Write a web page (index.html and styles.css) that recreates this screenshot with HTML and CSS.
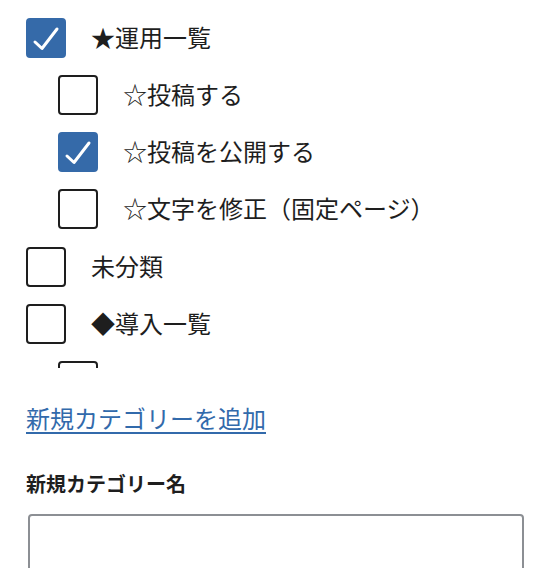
FILE: index.html
```html
<!DOCTYPE html>
<html lang="ja">
<head>
<meta charset="utf-8">
<link rel="stylesheet" href="styles.css">
</head>
<body>
<div class="panel">
  <div class="cats-box">
    <ul class="cats">
      <li>
        <label class="row"><span class="box checked"><svg viewBox="0 0 40 40"><polyline points="9,24 16,30.5 31,11"/></svg></span><span class="txt">★運用一覧</span></label>
        <ul class="cats child">
          <li><label class="row"><span class="box"></span><span class="txt">☆投稿する</span></label></li>
          <li><label class="row"><span class="box checked"><svg viewBox="0 0 40 40"><polyline points="9,24 16,30.5 31,11"/></svg></span><span class="txt">☆投稿を公開する</span></label></li>
          <li><label class="row"><span class="box"></span><span class="txt">☆文字を修正（固定ページ）</span></label></li>
        </ul>
      </li>
      <li><label class="row"><span class="box"></span><span class="txt">未分類</span></label></li>
      <li>
        <label class="row"><span class="box"></span><span class="txt">◆導入一覧</span></label>
        <ul class="cats child">
          <li><label class="row"><span class="box"></span></label></li>
        </ul>
      </li>
    </ul>
  </div>
  <p class="add"><a href="#">新規カテゴリーを追加</a></p>
  <label class="lbl" for="newcat">新規カテゴリー名</label>
  <input class="name" id="newcat" type="text">
</div>
</body>
</html>
```

FILE: styles.css
```css
html, body {
  margin: 0;
  padding: 0;
  background: #fff;
}
body {
  font-family: "Noto Sans CJK JP", "Noto Sans", sans-serif;
  color: #1e1e1e;
}
.panel {
  padding: 0 26px;
}
.cats-box {
  height: 368px;
  overflow: hidden;
}
.cats {
  list-style: none;
  margin: 0;
  padding: 18px 0 0;
}
.cats.child {
  padding: 17.17px 0 0 32px;
}
.cats li + li {
  margin-top: 17.17px;
}
.row {
  display: flex;
  align-items: center;
  gap: 25px;
  height: 40px;
  font-size: 24px;
}
.box {
  flex: none;
  box-sizing: border-box;
  width: 40px;
  height: 40px;
  border: 2px solid #1e1e1e;
  border-radius: 4px;
  background: #fff;
}
.box.checked {
  border-color: #356aa9;
  background: #356aa9;
  position: relative;
}
.box svg {
  position: absolute;
  left: -2px;
  top: -2px;
  width: 40px;
  height: 40px;
  fill: none;
  stroke: #fff;
  stroke-width: 3px;
  stroke-linecap: round;
  stroke-linejoin: round;
}
.txt {
  white-space: nowrap;
  line-height: 40px;
  padding-bottom: 2px;
}
.add {
  margin: 32px 0 0;
  font-size: 24px;
  line-height: 36px;
}
.add a {
  color: #326aab;
  text-decoration: underline;
  text-decoration-thickness: 2px;
  text-underline-offset: 4px;
}
.lbl {
  display: block;
  margin-top: 34px;
  font-size: 20px;
  font-weight: 700;
  line-height: 28px;
}
.name {
  display: block;
  box-sizing: border-box;
  margin: 16px 0 0 2px;
  width: 496px;
  height: 64px;
  border: 2px solid #8c8f94;
  border-radius: 4px;
  background: #fff;
}
```
